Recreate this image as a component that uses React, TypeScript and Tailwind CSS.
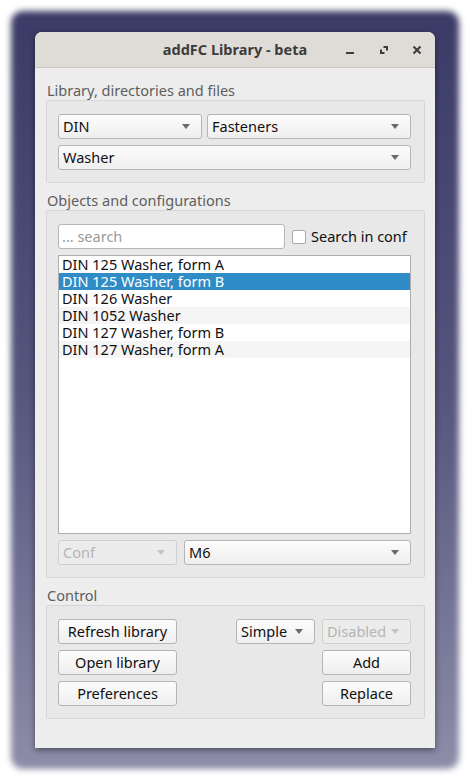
import React from "react";

const font = { fontFamily: '"Noto Sans", "Open Sans", sans-serif' };

function Arrow({ disabled = false }: { disabled?: boolean }) {
  return (
    <svg width="8" height="5" viewBox="0 0 8 5" className="shrink-0">
      <path d="M0 0 L8 0 L4 5 Z" fill={disabled ? "#c4c4c4" : "#6a6a6a"} />
    </svg>
  );
}

function Combo({
  label,
  className = "",
  disabled = false,
}: {
  label: string;
  className?: string;
  disabled?: boolean;
}) {
  return (
    <div
      className={`flex h-[25px] items-center justify-between rounded-[3px] border pl-[4px] pr-[11px] text-[14.5px] ${
        disabled
          ? "border-[#cfcfcf] bg-[#ececec] text-[#b4b4b4]"
          : "border-[#b5b5b5] bg-gradient-to-b from-[#fcfcfc] to-[#efefef] text-[#101010]"
      } ${className}`}
    >
      <span className="leading-none">{label}</span>
      <Arrow disabled={disabled} />
    </div>
  );
}

function Button({ label, className = "" }: { label: string; className?: string }) {
  return (
    <div
      className={`flex h-[25px] items-center justify-center rounded-[3px] border border-[#b5b5b5] bg-gradient-to-b from-[#fcfcfc] to-[#efefef] text-[14.5px] text-[#101010] ${className}`}
    >
      {label}
    </div>
  );
}

function Group({ title, children }: { title: string; children: React.ReactNode }) {
  return (
    <div className="flex flex-col">
      <div className="h-[20px] pl-[1px] text-[14.5px] leading-[20px] text-[#5e5e5e]">{title}</div>
      <div className="rounded-[2px] border border-[#d6d6d6] bg-[#e8e8e8] pb-[12px] pl-[11px] pr-[13px] pt-[13px]">
        {children}
      </div>
    </div>
  );
}

const items = [
  "DIN 125 Washer, form A",
  "DIN 125 Washer, form B",
  "DIN 126 Washer",
  "DIN 1052 Washer",
  "DIN 127 Washer, form B",
  "DIN 127 Washer, form A",
];

export default function App() {
  return (
    <div className="relative h-[780px] w-[470px] overflow-hidden bg-white" style={font}>
      {/* desktop backdrop behind the window */}
      <div className="absolute inset-[11px] rounded-[12px] bg-gradient-to-b from-[#3b3b67] via-[#55557e] to-[#8d8da8] blur-[3px]" />

      <div className="relative ml-[35px] mt-[32px] flex h-[716px] w-[400px] flex-col overflow-hidden rounded-t-[7px] bg-[#ededed] shadow-[0_2px_6px_rgba(0,0,0,0.45)]">
        {/* title bar */}
        <div className="relative flex h-[36px] shrink-0 items-center justify-center border-b border-[#c9c5bf] bg-[#dfdbd6]">
          <span className="text-[14.5px] font-bold text-[#3c3c3c]">addFC Library - beta</span>
          <div className="absolute right-[12px] top-0 flex h-full items-center gap-[21px]">
            <svg width="12" height="12" viewBox="0 0 12 12" className="-ml-[4px]">
              <rect x="1" y="8" width="8" height="2" fill="#3c3c3c" />
            </svg>
            <svg width="12" height="12" viewBox="0 0 12 12">
              <path d="M5.5 2 H10 V6.5 H8 V4 H5.5 Z" fill="#3c3c3c" />
              <path d="M2 5.5 V10 H6.5 V8 H4 V5.5 Z" fill="#3c3c3c" />
            </svg>
            <svg width="12" height="12" viewBox="0 0 12 12">
              <path d="M2.5 2.5 L9.5 9.5 M9.5 2.5 L2.5 9.5" stroke="#3c3c3c" strokeWidth="2" />
            </svg>
          </div>
        </div>

        <div className="flex flex-col gap-[7px] pl-[11px] pr-[10px] pt-[12px]">
          <Group title="Library, directories and files">
            <div className="flex flex-col gap-[6px]">
              <div className="flex gap-[5px]">
                <Combo label="DIN" className="w-[144px]" />
                <Combo label="Fasteners" className="flex-1" />
              </div>
              <Combo label="Washer" />
            </div>
          </Group>

          <Group title="Objects and configurations">
            <div className="flex flex-col gap-[6px]">
              <div className="flex items-center">
                <div className="flex h-[25px] w-[227px] items-center rounded-[3px] border border-[#b5b5b5] bg-white pl-[3px] text-[14.5px] text-[#9a9a9a]">
                  ... search
                </div>
                <div className="ml-[7px] h-[14px] w-[14px] rounded-[2px] border border-[#a8a8a8] bg-white" />
                <span className="ml-[5px] text-[14.5px] text-[#101010]">Search in conf</span>
              </div>
              <div className="flex h-[279px] flex-col border border-[#adadad] bg-white text-[14.5px]">
                {items.map((it, i) => (
                  <div
                    key={it}
                    className={`h-[17px] pl-[3px] leading-[17px] ${
                      i === 1
                        ? "bg-[#308cc6] text-white"
                        : i % 2 === 1
                        ? "bg-[#f5f5f5] text-[#101010]"
                        : "bg-white text-[#101010]"
                    }`}
                  >
                    {it}
                  </div>
                ))}
              </div>
              <div className="flex gap-[7px]">
                <Combo label="Conf" disabled className="w-[119px]" />
                <Combo label="M6" className="flex-1" />
              </div>
            </div>
          </Group>

          <Group title="Control">
            <div className="flex justify-between">
              <div className="flex w-[119px] flex-col gap-[6px]">
                <Button label="Refresh library" />
                <Button label="Open library" />
                <Button label="Preferences" />
              </div>
              <div className="flex flex-col gap-[6px]">
                <div className="flex gap-[7px]">
                  <Combo label="Simple" className="w-[79px]" />
                  <Combo label="Disabled" disabled className="w-[89px]" />
                </div>
                <Button label="Add" className="ml-auto w-[89px]" />
                <Button label="Replace" className="ml-auto w-[89px]" />
              </div>
            </div>
          </Group>
        </div>
      </div>
    </div>
  );
}
